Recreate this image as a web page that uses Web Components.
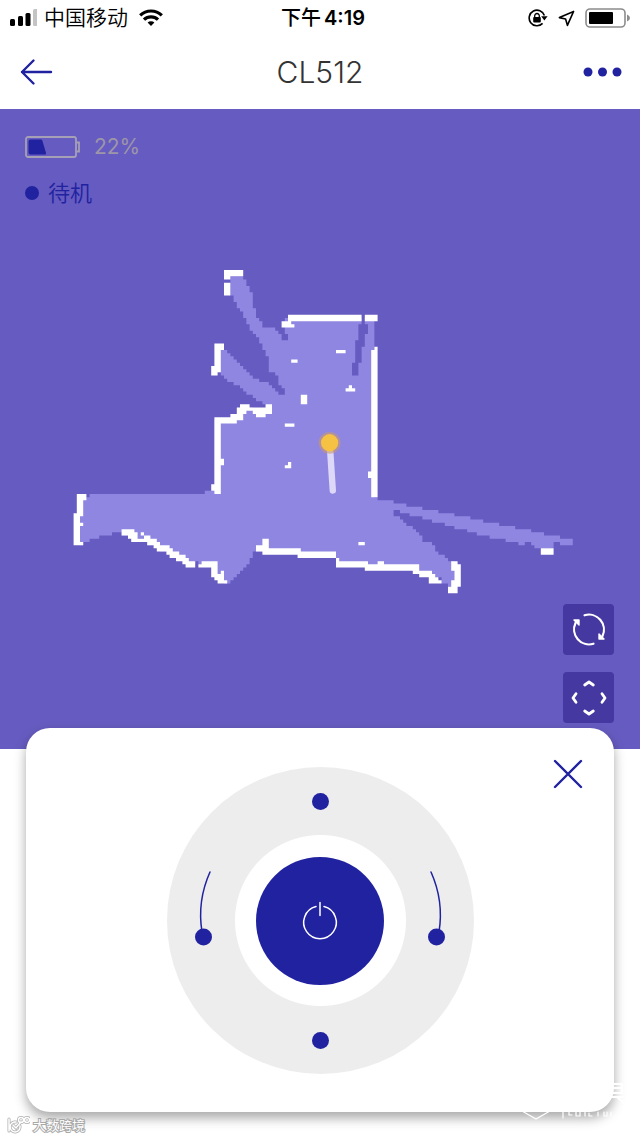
<!DOCTYPE html>
<html lang="zh-CN">
<head>
<meta charset="UTF-8">
<meta name="viewport" content="width=device-width, initial-scale=1">
<title>CL512</title>
<style>
    :root {
        --brand: #2022a0;
        --map-bg: #665bc0;
        --map-floor: #8f86e2;
        --tool-bg: #4538a0;
    }

    body {
        margin: 0;
        background: #fff;
        font-family: Inter, "Noto Sans CJK SC", sans-serif;
    }
</style>
</head>
<body>
<robot-app></robot-app>

<script>
function attach(el, html) {
    const template = document.createElement('template');
    template.innerHTML = html;
    el.attachShadow({ mode: 'open' }).appendChild(template.content.cloneNode(true));
}

class StatusBar extends HTMLElement {
    constructor() {
        super();
        attach(this, `
            <style>
                :host {
                    display: grid;
                    grid-template-columns: 1fr auto 1fr;
                    align-items: center;
                    height: 36px;
                    padding: 0 9px;
                    font-size: 20px;
                    line-height: 36px;
                    color: #000;
                }
                .side { display: flex; align-items: center; gap: 7px; }
                .carrier { font-size: 21px; font-weight: 350; }
                .end { justify-content: flex-end; gap: 10px; }
                .time { display: flex; gap: 3px; padding-left: 6px; font-weight: 600; }
                .time span:first-child { font-weight: 500; }
                .wifi { margin-left: 4px; }
                svg { display: block; }
            </style>
            <div class="side">
                <svg width="28" height="18" viewBox="0 0 28 18">
                    <rect x="1" y="10" width="5" height="7" rx="1.5"/>
                    <rect x="9" y="7" width="5" height="10" rx="1.5"/>
                    <rect x="16.5" y="4" width="5" height="13" rx="1.5"/>
                    <rect x="24" y="0" width="5" height="17" rx="1.5" fill="#c4c4c4"/>
                </svg>
                <span class="carrier">中国移动</span>
                <svg class="wifi" width="24" height="18" viewBox="0 0 24 18" fill="none" stroke="#000" stroke-width="3.2">
                    <path d="M1.2 6.4a15.4 15.4 0 0 1 21.6 0"/>
                    <path d="M5 10.7a10 10 0 0 1 14 0"/>
                    <path d="M12 17l-3.4-3.4a4.8 4.8 0 0 1 6.8 0z" fill="#000" stroke="none"/>
                </svg>
            </div>
            <div class="time"><span>下午</span><span>4:19</span></div>
            <div class="side end">
                <svg width="20" height="18" viewBox="0 0 20 18" fill="none" stroke="#000" stroke-width="1.6">
                    <path d="M16.4 6.6A7.8 7.8 0 1 0 14.6 14.4"/>
                    <path d="M13.2 7.2h6.4l-3.2 4.2z" fill="#000" stroke="none"/>
                    <rect x="5.2" y="8" width="7.6" height="5.6" rx="1" fill="#000" stroke="none"/>
                    <path d="M6.7 8.4V6.8a2.3 2.3 0 0 1 4.6 0v1.6" stroke-width="1.3"/>
                </svg>
                <svg width="17" height="17" viewBox="0 0 17 17" fill="none" stroke="#000" stroke-width="1.6" stroke-linejoin="round">
                    <path d="M15.6 1.4L1.4 7.6l6.2 1.4 1.8 6.4z"/>
                </svg>
                <svg width="46" height="20" viewBox="0 0 46 20">
                    <rect x="1" y="1" width="39" height="18" rx="4" fill="none" stroke="#8c8c8c" stroke-width="1.6"/>
                    <rect x="4" y="4" width="24" height="12" rx="1"/>
                    <path d="M42 6.5q3 1.2 3 3.5t-3 3.5z" fill="#8c8c8c"/>
                </svg>
            </div>
        `);
    }
}

class NavBar extends HTMLElement {
    constructor() {
        super();
        attach(this, `
            <style>
                :host {
                    display: grid;
                    grid-template-columns: 1fr auto 1fr;
                    align-items: center;
                    height: 71px;
                    padding: 0 18px 2px;
                }
                h1 {
                    margin: 0;
                    font-size: 30px;
                    line-height: 40px;
                    font-weight: 300;
                    color: #333;
                }
                a, button {
                    display: block;
                    width: max-content;
                    padding: 0;
                    border: 0;
                    background: none;
                    color: var(--brand);
                }
                button { justify-self: end; }
                svg { display: block; }
            </style>
            <a href="#" aria-label="返回">
                <svg width="36" height="28" viewBox="0 0 36 28" fill="none" stroke="currentColor" stroke-width="2.4" stroke-linecap="round" stroke-linejoin="round">
                    <path d="M33 14H4M15.5 2.5L4 14l11.5 11.5"/>
                </svg>
            </a>
            <h1><slot></slot></h1>
            <button type="button" aria-label="更多">
                <svg width="40" height="10" viewBox="0 0 40 10" fill="currentColor">
                    <circle cx="6" cy="5" r="4.5"/>
                    <circle cx="20.5" cy="5" r="4.5"/>
                    <circle cx="35" cy="5" r="4.5"/>
                </svg>
            </button>
        `);
    }
}

// Walls as [x, y, width, height] in map cells, 200 cells to a side
const WALLS = [
    // upper left corridor
    [70, 50, 6, 2], [70, 52, 2, 1], [70, 54, 2, 4],
    // second corridor
    [67, 73, 3, 2], [67, 75, 2, 7], [66, 80, 2, 3],
    // top wall
    [90, 64, 23, 2], [114, 64, 4, 2], [88, 66, 3, 2], [91, 67, 1, 1],
    // right wall
    [117, 74, 1, 1], [116, 75, 2, 46], [115, 113, 1, 2],
    // left wall
    [67, 96, 7, 2], [67, 98, 2, 22], [69, 109, 1, 2], [66, 117, 1, 2],
    [72, 95, 4, 2], [74, 93, 3, 2], [75, 92, 3, 2], [78, 93, 5, 1], [79, 94, 4, 1], [80, 95, 3, 1], [83, 92, 2, 3],
    // far left room
    [24, 120, 3, 2], [24, 122, 2, 4], [23, 126, 2, 9], [25, 126, 1, 1], [25, 129, 1, 1], [23, 135, 3, 1],
    // lower left diagonal
    [38, 131, 4, 2], [40, 133, 3, 1], [41, 132, 2, 1], [44, 132, 1, 1], [41, 134, 6, 1], [45, 133, 2, 1],
    [46, 134, 3, 2], [48, 135, 2, 2], [49, 136, 4, 2], [52, 137, 2, 1], [52, 138, 4, 1], [53, 139, 4, 1],
    [55, 139, 3, 2], [57, 140, 2, 2], [58, 141, 3, 2],
    [63, 141, 5, 1], [62, 142, 6, 1], [66, 143, 2, 3], [67, 146, 3, 1], [69, 144, 1, 3], [68, 145, 1, 1], [68, 147, 3, 1],
    // bottom wall
    [82, 134, 2, 4], [80, 136, 4, 2], [82, 137, 12, 2], [93, 138, 12, 2], [105, 140, 1, 1], [105, 141, 10, 2],
    [114, 142, 17, 2], [118, 141, 2, 1], [129, 144, 6, 1], [131, 145, 5, 1], [134, 146, 3, 1], [134, 147, 4, 1],
    [141, 141, 2, 3], [142, 142, 2, 7], [141, 147, 1, 2], [140, 149, 3, 2],
    // obstacles
    [105, 75, 3, 1], [91, 78, 2, 1], [109, 86, 1, 1], [108, 87, 3, 1], [94, 89, 2, 3], [89, 98, 3, 1],
    [90, 110, 1, 1], [89, 111, 2, 1], [112, 135, 2, 1], [169, 137, 4, 2]
];

class FloorMap extends HTMLElement {
    constructor() {
        super();
        const walls = WALLS.map(([x, y, w, h]) => `M${x} ${y}h${w}v${h}h${-w}z`).join('');
        attach(this, `
            <style>
                :host { display: block; }
                svg { display: block; width: 100%; height: auto; }
                .floor { fill: var(--map-floor); }
                .shade { fill: var(--map-bg); }
                .wall { fill: #fff; }
            </style>
            <svg viewBox="0 0 200 200" role="img" aria-label="清扫地图">
                <g transform="translate(0 .3)">
                    <path class="floor" d="M72 52H76V53H77V55H78V57H79V62H80V65H81V66H82V68H86V69H87V70H88V72H90V70H89V65
                        H117V121H118V122H123V123H127V124H132V125H137V126H142V127H147V128H151V129H156V130H161V131H166V132
                        H170V133H175V134H179V136H175V135H173V137H167V136H166V135H164V136H162V135H158V134H153V133H149V132
                        H146V131H142V130H139V129H135V128H132V127H128V126H125V125H123V127H125V128H126V129H127V130H129V131
                        H130V132H131V133H132V135H135V136H136V138H137V139H139V140H140V141H142V149H140V148H138V146H135V145
                        H130V143H115V142H105V139H93V138H80V138H79V140H78V142H77V143H76V144H75V145H74V146H73V147H72V148
                        H70V146H67V142H62V141H61V142H59V141H57V140H54V138H50V136H46V134H41V133H38V132H35V133H31V134H28
                        V135H26V136H25V121H28V120H64V119H67V97H73V95H76V93H79V94H83V92H82V91H80V90H79V89H77V88H76V87
                        H75V86H73V85H71V84H70V83H69V82H68V75H70V75H71V76H72V77H73V78H74V79H75V80H76V81H77V82H78V83
                        H79V84H81V85H84V86H85V87H86V88H87V89H89V87H88V86H87V83H86V82H84V77H83V75H82V73H81V71H80V70
                        H79V69H78V67H77V65H76V63H75V62H74V60H73V58H72z"/>
                    <path class="shade" d="M113 64h1v3h1v3h-1v4h-1v5h-1v4h-2v-4h1v-7h1v-5h1z"/>
                    <path class="wall" d="${walls}"/>
                </g>
                <path d="M103.2 107L104 119.200" stroke="#ddd8f8" stroke-width="2" stroke-linecap="round"/>
                <circle cx="103" cy="104.300" r="3.4" fill="#c99a72" opacity=".6"/>
                <circle cx="103" cy="104.300" r="2.7" fill="#f6c244"/>
            </svg>
        `);
    }
}

class RobotState extends HTMLElement {
    constructor() {
        super();
        attach(this, `
            <style>
                :host { display: grid; gap: 14px; font-size: 22px; line-height: 32px; }
                div { display: flex; align-items: center; }
                .battery { gap: 14px; font-size: 21px; color: #9c96a8; }
                .mode { gap: 9px; font-weight: 350; color: var(--brand); }
                .mode::before {
                    content: '';
                    width: 14px;
                    height: 14px;
                    border-radius: 50%;
                    background: currentColor;
                }
                svg { display: block; }
            </style>
            <div class="battery">
                <svg width="55" height="22" viewBox="0 0 55 22" fill="none" stroke="#a5a0b5" stroke-width="1.8">
                    <rect x="1" y="1" width="50" height="20" rx="2"/>
                    <path d="M51.5 6.500h2.500v9h-2.500"/>
                    <path d="M5.5 3.500H16q1 0 1.300 1L21 17q.5 1.500-1 1.500H5.500q-2 0-2-2v-11q0-2 2-2z" fill="#2022a0" stroke="none"/>
                </svg>
                <span><slot name="battery"></slot></span>
            </div>
            <div class="mode"><slot name="mode"></slot></div>
        `);
    }
}

class MapTools extends HTMLElement {
    constructor() {
        super();
        attach(this, `
            <style>
                :host { display: grid; gap: 17px; }
                button {
                    display: grid;
                    place-items: center;
                    width: 51px;
                    height: 51px;
                    padding: 0;
                    border: 0;
                    border-radius: 4px;
                    background: var(--tool-bg);
                }
                svg { fill: none; stroke: #fff; stroke-linecap: round; stroke-linejoin: round; }
            </style>
            <button type="button" aria-label="刷新地图">
                <svg width="36" height="36" viewBox="0 0 36 36" stroke-width="2.2">
                    <path d="M13.5 3.300A15 15 0 0 1 31.500 24"/>
                    <path d="M22.5 31.700A15 15 0 0 1 4.500 11"/>
                    <path d="M28 22V27H33zM8 13V8H3z" fill="#fff" stroke-width="1.4"/>
                </svg>
            </button>
            <button type="button" aria-label="遥控">
                <svg width="36" height="36" viewBox="0 0 36 36" stroke-width="2.8">
                    <path d="M13.7 5L18 2l4.300 3M13.700 31l4.300 3 4.300-3M5 13.700L2 18l3 4.300M31 13.700l3 4.300-3 4.300"/>
                </svg>
            </button>
        `);
    }
}

class MapView extends HTMLElement {
    constructor() {
        super();
        attach(this, `
            <style>
                :host { display: block; position: relative; background: var(--map-bg); }
                robot-state { position: absolute; left: 25px; top: 22px; }
                map-tools { position: absolute; right: 26px; bottom: 26px; }
            </style>
            <floor-map></floor-map>
            <robot-state>
                <span slot="battery">22%</span>
                <span slot="mode">待机</span>
            </robot-state>
            <map-tools></map-tools>
        `);
    }
}

class ControlDial extends HTMLElement {
    constructor() {
        super();
        attach(this, `
            <style>
                :host {
                    display: grid;
                    grid-template: 68px 171px 68px / 68px 171px 68px;
                    grid-template-areas: ". up ." "left power right" ". down .";
                    border-radius: 50%;
                    background: radial-gradient(circle, #fff 85px, #ededed 86px);
                }
                button {
                    display: grid;
                    place-items: center;
                    padding: 0;
                    border: 0;
                    background: none;
                    color: var(--brand);
                }
                .up { grid-area: up; }
                .down { grid-area: down; }
                .left { grid-area: left; }
                .right { grid-area: right; }
                .right svg { transform: scaleX(-1); }
                .power {
                    grid-area: power;
                    place-self: center;
                    width: 128px;
                    height: 128px;
                    border-radius: 50%;
                    background: var(--brand);
                    color: #fff;
                }
                .dot { width: 17px; height: 17px; border-radius: 50%; background: currentColor; }
                svg { display: block; fill: none; stroke: currentColor; stroke-width: 1.5; stroke-linecap: round; }
            </style>
            <button class="up" type="button" aria-label="前进"><span class="dot"></span></button>
            <button class="left" type="button" aria-label="左转">
                <svg width="68" height="171" viewBox="0 0 68 171">
                    <path d="M43 37Q30 66 35 97"/>
                    <circle cx="36.5" cy="102" r="8.5" fill="currentColor" stroke="none"/>
                </svg>
            </button>
            <button class="power" type="button" aria-label="开关">
                <svg width="40" height="40" viewBox="0 0 40 40">
                    <path d="M16 5.600a16.300 16.300 0 1 0 8 0M20 1.500v13"/>
                </svg>
            </button>
            <button class="right" type="button" aria-label="右转">
                <svg width="68" height="171" viewBox="0 0 68 171">
                    <path d="M43 37Q30 66 35 97"/>
                    <circle cx="37.5" cy="102" r="8.5" fill="currentColor" stroke="none"/>
                </svg>
            </button>
            <button class="down" type="button" aria-label="后退"><span class="dot"></span></button>
        `);
    }
}

class RemotePanel extends HTMLElement {
    constructor() {
        super();
        attach(this, `
            <style>
                :host {
                    display: flex;
                    justify-content: center;
                    position: relative;
                    padding: 39px 0 38px;
                    border-radius: 24px;
                    background: #fff;
                    box-shadow: 0 6px 12px rgba(0, 0, 0, .34);
                }
                .close {
                    position: absolute;
                    top: 30px;
                    right: 30px;
                    padding: 0;
                    border: 0;
                    background: none;
                    color: var(--brand);
                }
                svg { display: block; fill: none; stroke: currentColor; stroke-width: 2.4; stroke-linecap: round; }
            </style>
            <slot></slot>
            <button class="close" type="button" aria-label="关闭">
                <svg width="32" height="32" viewBox="0 0 32 32"><path d="M3 3l26 26M29 3L3 29"/></svg>
            </button>
        `);
    }
}

class PageMark extends HTMLElement {
    constructor() {
        super();
        attach(this, `
            <style>
                :host {
                    display: flex;
                    align-items: center;
                    gap: 3px;
                    height: 26px;
                    padding-left: 7px;
                    position: relative;
                    font-size: 13px;
                    line-height: 18px;
                    color: #fff;
                }
                .name { -webkit-text-stroke: 2px #a8a8a8; paint-order: stroke fill; }
                svg { display: block; fill: none; stroke-linecap: round; }
                .corner { position: absolute; right: 16px; bottom: 18px; }
            </style>
            <svg width="23" height="18" viewBox="0 0 23 18">
                <g stroke="#b0b0b0" stroke-width="3">
                    <path d="M2 3v12M9 6a5 5 0 1 0 4 4M6 9l3 3 5-6"/>
                    <circle cx="14" cy="4" r="2.5"/>
                    <circle cx="20" cy="4" r="2.5"/>
                </g>
                <g stroke="#fff" stroke-width="1.5">
                    <path d="M2 3v12M9 6a5 5 0 1 0 4 4M6 9l3 3 5-6"/>
                    <circle cx="14" cy="4" r="2.5"/>
                    <circle cx="20" cy="4" r="2.5"/>
                </g>
            </svg>
            <span class="name">大数跨境</span>
            <svg class="corner" width="104" height="38" viewBox="0 0 104 38" stroke="#fff" stroke-width="1.2">
                <path d="M2 29l14 8 14-8"/>
                <path d="M43 30v6M49 30v3h3M56 30v4h4v-4M65 30v4M69 31v3h3M78 30v4M84 30v4h3v-4M91 30v4"/>
                <path d="M92 2h10v9H92M92 6h10M92 15h11M97 15l7 6" stroke-width="2"/>
            </svg>
        `);
    }
}

class RobotApp extends HTMLElement {
    constructor() {
        super();
        attach(this, `
            <style>
                :host { display: flex; flex-direction: column; min-height: 100vh; }
                remote-panel { margin: -21px 26px 0; }
            </style>
            <status-bar></status-bar>
            <nav-bar>CL512</nav-bar>
            <map-view></map-view>
            <remote-panel><control-dial></control-dial></remote-panel>
            <page-mark></page-mark>
        `);
    }
}

customElements.define('status-bar', StatusBar);
customElements.define('nav-bar', NavBar);
customElements.define('floor-map', FloorMap);
customElements.define('robot-state', RobotState);
customElements.define('map-tools', MapTools);
customElements.define('map-view', MapView);
customElements.define('control-dial', ControlDial);
customElements.define('remote-panel', RemotePanel);
customElements.define('page-mark', PageMark);
customElements.define('robot-app', RobotApp);
</script>
</body>
</html>
